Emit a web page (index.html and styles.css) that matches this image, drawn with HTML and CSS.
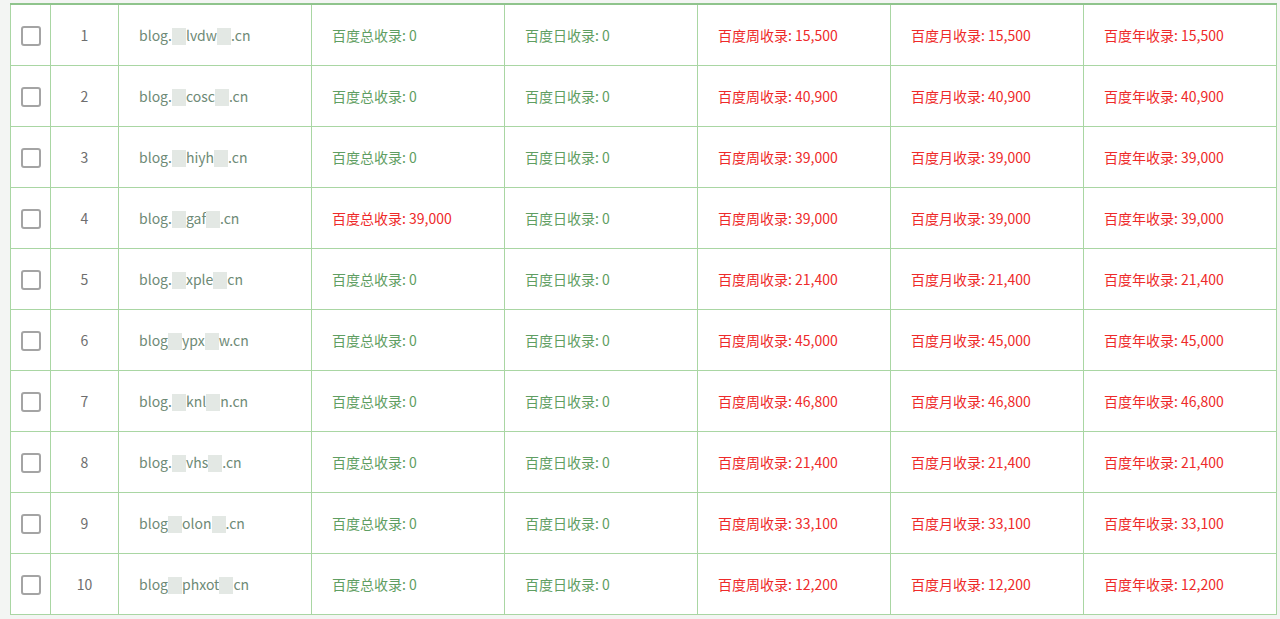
FILE: index.html
```html
<!DOCTYPE html>
<html lang="zh-CN">
<head>
<meta charset="utf-8">
<title>收录列表</title>
<link rel="stylesheet" href="styles.css">
</head>
<body>
<div class="wrap">
<table class="grid">
<colgroup>
<col class="c-chk"><col class="c-no"><col class="c-dom"><col class="c-st"><col class="c-st"><col class="c-st"><col class="c-st"><col class="c-st">
</colgroup>
<tbody>
<tr><td class="chk"><span class="box"></span></td><td class="no">1</td><td class="dom">blog.<i class="mz"></i>lvdw<i class="mz"></i>.cn</td><td class="g">百度总收录: 0</td><td class="g">百度日收录: 0</td><td class="r">百度周收录: 15,500</td><td class="r">百度月收录: 15,500</td><td class="r">百度年收录: 15,500</td></tr>
<tr><td class="chk"><span class="box"></span></td><td class="no">2</td><td class="dom">blog.<i class="mz"></i>cosc<i class="mz"></i>.cn</td><td class="g">百度总收录: 0</td><td class="g">百度日收录: 0</td><td class="r">百度周收录: 40,900</td><td class="r">百度月收录: 40,900</td><td class="r">百度年收录: 40,900</td></tr>
<tr><td class="chk"><span class="box"></span></td><td class="no">3</td><td class="dom">blog.<i class="mz"></i>hiyh<i class="mz"></i>.cn</td><td class="g">百度总收录: 0</td><td class="g">百度日收录: 0</td><td class="r">百度周收录: 39,000</td><td class="r">百度月收录: 39,000</td><td class="r">百度年收录: 39,000</td></tr>
<tr><td class="chk"><span class="box"></span></td><td class="no">4</td><td class="dom">blog.<i class="mz"></i>gaf<i class="mz"></i>.cn</td><td class="r">百度总收录: 39,000</td><td class="g">百度日收录: 0</td><td class="r">百度周收录: 39,000</td><td class="r">百度月收录: 39,000</td><td class="r">百度年收录: 39,000</td></tr>
<tr><td class="chk"><span class="box"></span></td><td class="no">5</td><td class="dom">blog.<i class="mz"></i>xple<i class="mz"></i>cn</td><td class="g">百度总收录: 0</td><td class="g">百度日收录: 0</td><td class="r">百度周收录: 21,400</td><td class="r">百度月收录: 21,400</td><td class="r">百度年收录: 21,400</td></tr>
<tr><td class="chk"><span class="box"></span></td><td class="no">6</td><td class="dom">blog<i class="mz"></i>ypx<i class="mz"></i>w.cn</td><td class="g">百度总收录: 0</td><td class="g">百度日收录: 0</td><td class="r">百度周收录: 45,000</td><td class="r">百度月收录: 45,000</td><td class="r">百度年收录: 45,000</td></tr>
<tr><td class="chk"><span class="box"></span></td><td class="no">7</td><td class="dom">blog.<i class="mz"></i>knl<i class="mz"></i>n.cn</td><td class="g">百度总收录: 0</td><td class="g">百度日收录: 0</td><td class="r">百度周收录: 46,800</td><td class="r">百度月收录: 46,800</td><td class="r">百度年收录: 46,800</td></tr>
<tr><td class="chk"><span class="box"></span></td><td class="no">8</td><td class="dom">blog.<i class="mz"></i>vhs<i class="mz"></i>.cn</td><td class="g">百度总收录: 0</td><td class="g">百度日收录: 0</td><td class="r">百度周收录: 21,400</td><td class="r">百度月收录: 21,400</td><td class="r">百度年收录: 21,400</td></tr>
<tr><td class="chk"><span class="box"></span></td><td class="no">9</td><td class="dom">blog<i class="mz"></i>olon<i class="mz"></i>.cn</td><td class="g">百度总收录: 0</td><td class="g">百度日收录: 0</td><td class="r">百度周收录: 33,100</td><td class="r">百度月收录: 33,100</td><td class="r">百度年收录: 33,100</td></tr>
<tr><td class="chk"><span class="box"></span></td><td class="no">10</td><td class="dom">blog<i class="mz"></i>phxot<i class="mz"></i>cn</td><td class="g">百度总收录: 0</td><td class="g">百度日收录: 0</td><td class="r">百度周收录: 12,200</td><td class="r">百度月收录: 12,200</td><td class="r">百度年收录: 12,200</td></tr>
</tbody>
</table>
</div>
</body>
</html>
```
FILE: styles.css
```css
html, body {
  margin: 0;
  padding: 0;
  background: #f3f5f3;
  height: 100%;
  overflow: hidden;
}
.wrap {
  padding: 3px 3px 0 10px;
}
.grid {
  width: 1267px;
  border-collapse: collapse;
  table-layout: fixed;
  background: #fff;
  border-top: 2px solid #8fc48c;
  font-family: "Noto Sans CJK SC", "Noto Sans", "Liberation Sans", sans-serif;
  font-size: 14px;
}
.c-chk { width: 40px; }
.c-no { width: 68px; }
.c-dom { width: 193px; }
.c-st { width: 193px; }
.grid td {
  height: 60px;
  padding: 0 0 0 20px;
  border: 1px solid #a9d6a3;
  border-top: none;
  vertical-align: middle;
  white-space: nowrap;
  line-height: 20px;
}
.grid td.chk {
  padding: 0;
  text-align: center;
}
.box {
  display: inline-block;
  width: 16px;
  height: 16px;
  border: 2px solid #a4a4a4;
  border-radius: 3px;
  vertical-align: middle;
  background: #fff;
}
.grid td.no {
  padding: 0;
  text-align: center;
  color: #6e6e6e;
}
.dom {
  color: #6e8a76;
}
.g {
  color: #5f9e62;
}
.r {
  color: #ee2a2a;
}
.mz {
  display: inline-block;
  width: 14px;
  height: 17px;
  background: #e3e8e4;
  vertical-align: -4px;
}
```
